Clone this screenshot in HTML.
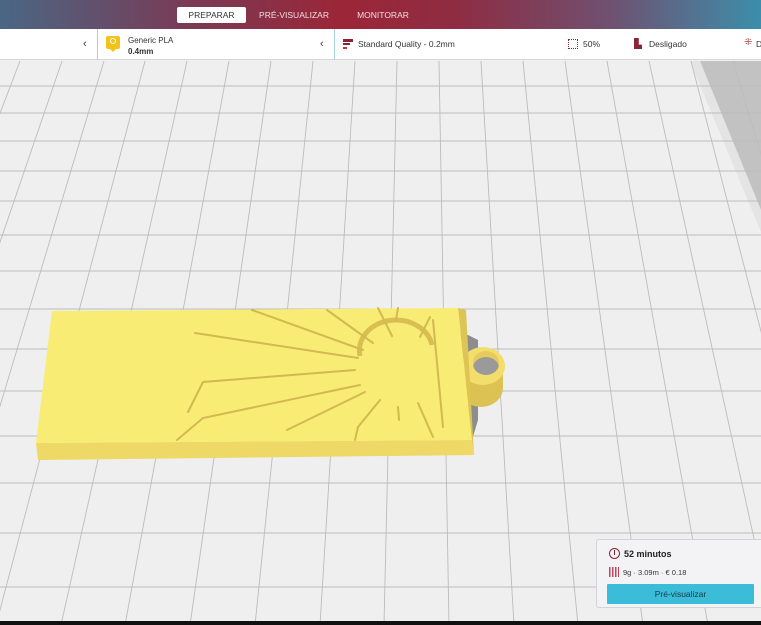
<!DOCTYPE html>
<html><head><meta charset="utf-8"><style>
*{margin:0;padding:0;box-sizing:border-box}
body{width:761px;height:625px;overflow:hidden;position:relative;font-family:"Liberation Sans","DejaVu Sans",sans-serif;background:#efefef}
.hdr{position:absolute;left:0;top:0;width:761px;height:29px;background:linear-gradient(90deg,#4a6784 0%,#7a3a55 25%,#9b2637 45%,#8f2c42 60%,#6f5070 80%,#3c8eab 100%)}
.tab{position:absolute;top:7px;height:16px;font-size:8.5px;color:#f1dde2;line-height:16px;text-align:center}
.tb{position:absolute;left:0;top:29px;width:761px;height:31px;background:#fff;border-bottom:1px solid #d8d8d8;font-size:8.5px;color:#333}
.t{position:absolute}
.panel{position:absolute;left:596px;top:539px;width:170px;height:69px;background:#f3f3f5;border:1px solid #d4d4d8;border-radius:3px}
</style></head><body>
<svg style="position:absolute;left:0;top:0" width="761" height="625">
<rect x="0" y="60" width="761" height="565" fill="#efefef"/>
<polygon points="690,61 700,61 761,210 761,232" fill="#e4e4e4"/>
<polygon points="700,61 761,61 761,210" fill="#c2c2c2"/>
<g stroke="#bcbcbc" stroke-width="0.9" fill="none">
<line x1="-274" y1="61" x2="-649" y2="625"/><line x1="-232" y1="61" x2="-584" y2="625"/><line x1="-190" y1="61" x2="-519" y2="625"/><line x1="-148" y1="61" x2="-455" y2="625"/><line x1="-106" y1="61" x2="-390" y2="625"/><line x1="-64" y1="61" x2="-325" y2="625"/><line x1="-22" y1="61" x2="-261" y2="625"/><line x1="20" y1="61" x2="-196" y2="625"/><line x1="62" y1="61" x2="-131" y2="625"/><line x1="104" y1="61" x2="-66" y2="625"/><line x1="145" y1="61" x2="-4" y2="625"/><line x1="187" y1="61" x2="61" y2="625"/><line x1="229" y1="61" x2="125" y2="625"/><line x1="271" y1="61" x2="190" y2="625"/><line x1="313" y1="61" x2="255" y2="625"/><line x1="355" y1="61" x2="320" y2="625"/><line x1="397" y1="61" x2="384" y2="625"/><line x1="439" y1="61" x2="449" y2="625"/><line x1="481" y1="61" x2="514" y2="625"/><line x1="523" y1="61" x2="578" y2="625"/><line x1="565" y1="61" x2="643" y2="625"/><line x1="607" y1="61" x2="708" y2="625"/><line x1="649" y1="61" x2="773" y2="625"/><line x1="691" y1="61" x2="837" y2="625"/><line x1="733" y1="61" x2="902" y2="625"/>
<line x1="0" y1="86" x2="761" y2="86"/><line x1="0" y1="113" x2="761" y2="113"/><line x1="0" y1="141" x2="761" y2="141"/><line x1="0" y1="171" x2="761" y2="171"/><line x1="0" y1="201" x2="761" y2="201"/><line x1="0" y1="235" x2="761" y2="235"/><line x1="0" y1="271" x2="761" y2="271"/><line x1="0" y1="309" x2="761" y2="309"/><line x1="0" y1="349" x2="761" y2="349"/><line x1="0" y1="391" x2="761" y2="391"/><line x1="0" y1="436" x2="761" y2="436"/><line x1="0" y1="483" x2="761" y2="483"/><line x1="0" y1="533" x2="761" y2="533"/><line x1="0" y1="587" x2="761" y2="587"/>
</g>
<polygon points="458,330 478,340 478,420 472,440" fill="#8d8d8d"/>
<ellipse cx="481" cy="388" rx="22" ry="19" fill="#dcc253"/>
<rect x="459" y="366" width="44" height="22" fill="#dcc253"/>
<ellipse cx="483" cy="366" rx="22" ry="19" fill="#f3de6c"/>
<ellipse cx="486" cy="364" rx="13" ry="11" fill="#9a9a9a"/>
<path d="M473 362 A13 11 0 0 1 499 362 L499 368 A13 11 0 0 0 473 368Z" fill="#e6cc5c"/>
<polygon points="458,308 466,310 474,455 472,440" fill="#dcc455"/>
<polygon points="36,443 472,440 474,455 38,460" fill="#eed866"/>
<polygon points="52,311 458,308 472,440 36,443" fill="#f9ec74"/>
<path d="M360 356 A36 30 0 0 1 432 345" fill="none" stroke="#d8bf52" stroke-width="5"/>
<g stroke="#d2b950" stroke-width="2" fill="none" stroke-linecap="round">
<path d="M195 333 L358 358"/><path d="M252 310 L363 350"/><path d="M327 310 L373 343"/><path d="M378 308 L392 336"/><path d="M398 308 L396 320"/>
<path d="M188 412 L203 382 L355 370"/><path d="M177 440 L203 418 L360 385"/><path d="M287 430 L365 392"/>
<path d="M380 400 L358 427 L355 440"/><path d="M398 407 L399 420"/><path d="M418 403 L433 437"/><path d="M433 320 L443 427"/><path d="M420 337 L430 317"/>
</g>
<rect x="0" y="621" width="761" height="4" fill="#111"/>
</svg>
<div class="hdr">
<div class="tab" style="left:177px;width:69px;background:#fff;color:#333;border-radius:2px">PREPARAR</div>
<div class="tab" style="left:258px;width:72px">PRÉ-VISUALIZAR</div>
<div class="tab" style="left:352px;width:62px">MONITORAR</div>
</div>
<div class="tb">
<div class="t" style="left:83px;top:9px;font-size:11px">‹</div>
<div class="t" style="left:97px;top:0;width:1px;height:31px;background:#a9cfd8"></div>
<div class="t" style="left:106px;top:7px;width:14px;height:13px;background:#f2c31c;border-radius:2px"></div>
<div class="t" style="left:110px;top:20px;width:0;height:0;border-left:3px solid transparent;border-right:3px solid transparent;border-top:3px solid #f2c31c"></div>
<div class="t" style="left:110px;top:9px;width:6px;height:6px;border:1px solid #fff;border-radius:50%"></div>
<div class="t" style="left:128px;top:7px;font-size:8px">Generic PLA</div>
<div class="t" style="left:128px;top:18px;font-size:8px;font-weight:bold">0.4mm</div>
<div class="t" style="left:320px;top:9px;font-size:11px">‹</div>
<div class="t" style="left:334px;top:0;width:1px;height:31px;background:#a9cfd8"></div>
<div class="t" style="left:343px;top:10px;width:10px;height:3px;background:#8c2438"></div>
<div class="t" style="left:343px;top:14px;width:7px;height:2px;background:#8c2438"></div>
<div class="t" style="left:343px;top:18px;width:4px;height:2px;background:#c33"></div>
<div class="t" style="left:358px;top:10px">Standard Quality - 0.2mm</div>
<div class="t" style="left:568px;top:10px;width:10px;height:10px;border:1px dotted #8c2438"></div>
<div class="t" style="left:583px;top:10px">50%</div>
<div class="t" style="left:634px;top:9px;width:8px;height:11px;background:#8c2438;clip-path:polygon(0 0,60% 0,60% 60%,100% 60%,100% 100%,0 100%)"></div>
<div class="t" style="left:649px;top:10px">Desligado</div>
<div class="t" style="left:744px;top:8px;font-size:10px;color:#a44">⁜</div>
<div class="t" style="left:756px;top:10px">D</div>
</div>
<div class="panel">
<div class="t" style="left:12px;top:8px;width:11px;height:11px;border:1.3px solid #8c2438;border-radius:50%"></div>
<div class="t" style="left:17px;top:10px;width:1px;height:5px;background:#8c2438"></div>
<div class="t" style="left:27px;top:9px;font-size:9px;font-weight:bold;color:#222">52 minutos</div>
<div class="t" style="left:12px;top:27px;width:10px;height:10px;background:repeating-linear-gradient(90deg,#c0445a 0 1.5px,transparent 1.5px 3px)"></div>
<div class="t" style="left:26px;top:28px;font-size:7.5px;color:#333">9g · 3.09m · € 0.18</div>
<div class="t" style="left:10px;top:44px;width:147px;height:20px;background:#3bbcd8;border-radius:1px;font-size:8.5px;color:#173a48;text-align:center;line-height:20px">Pré-visualizar</div>
</div>
</body></html>
